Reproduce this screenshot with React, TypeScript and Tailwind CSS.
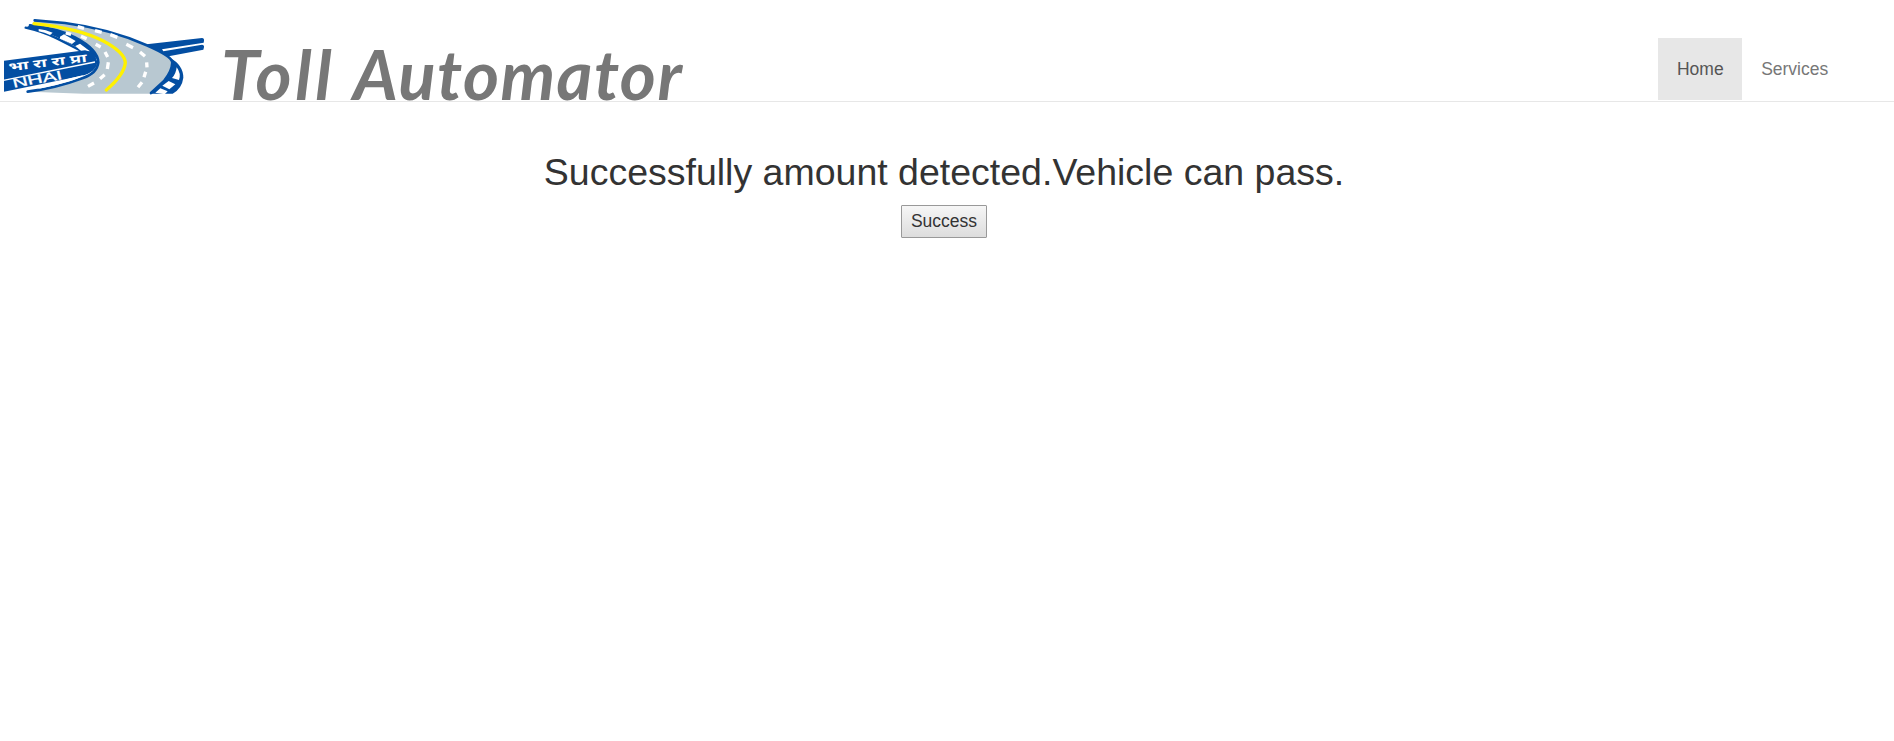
function Logo() {
  return (
    <svg viewBox="0 0 630 255" className="h-[85px] w-[210px] shrink-0" role="img" aria-label="NHAI">
      <path d="M440 103 L606 84 Q613 84 612 92 L611 98 L486 118 L490 124 L606 104 Q613 104 612 112 L610 119 L490 142Z" fill="#034ea2" />
      <path d="M510 143 Q550 165 550 203 Q546 235 518 251 L450 251 L505 200Z" fill="#034ea2" />
      <path d="M530 172 Q544 191 537 210 L516 204 Q528 192 530 172ZM506 213 L526 223 L508 238 L487 227ZM481 235 L503 244 L494 253 L466 248Z" fill="#fff" />
      <path d="M105 31 L195 39 Q330 57 440 104 Q514 133 517 158 Q516 184 493 212 L450 251 L250 251 L90 245 Q190 226 247 205 Q293 188 296 155 Q288 110 208 77 Q160 57 97 41Z" fill="#b8c8d1" />
      <path d="M104 31 L195 39 Q332 57 440 106 Q516 139 517 158 Q516 184 493 212 L453 249" fill="none" stroke="#034ea2" strokeWidth="8" strokeLinecap="round" />
      <path d="M77 53 Q130 62 170 81 L253 124 L270 128 L294 150 Q288 116 225 82 Q170 56 90 46Z" fill="#034ea2" />
      <path d="M77 53 Q130 65 172 86 L250 126" fill="none" stroke="#034ea2" strokeWidth="7" strokeLinecap="round" />
      <path d="M90 46 Q175 56 225 82 Q294 118 295 157 Q291 190 249 204 Q165 235 83 245" fill="none" stroke="#034ea2" strokeWidth="8" strokeLinecap="round" />
      <path d="M116 57 Q138 59 158 68 L150 75 Q134 68 116 64ZM180 80 L192 73 L227 93 L216 102 L180 86ZM226 108 L240 101 L270 124 L247 126Z" fill="#fff" />
      <path d="M12 152 L255 121 Q285 126 292 155 Q289 186 246 197 L12 245Z" fill="#034ea2" />
      <path d="M102 41 Q235 55 310 93 Q374 127 376 158 Q373 194 319 240" fill="none" stroke="#fff100" strokeWidth="10" strokeLinecap="round" />
      <path d="M197 69 L213 73 M243 79 L260 86 M287 103 L302 111 M315 126 L323 141 M325 157 L322 177 M314 194 L300 206 M282 219 L264 229" stroke="#fff" strokeWidth="10" />
      <path d="M233 50 L252 55 M285 62 L305 67 M331 74 L352 82 M379 103 L399 113 M420 126 L435 139 M440 157 L441 172 M437 185 L432 202 M426 217 L414 232" stroke="#fff" strokeWidth="10" />
      <path d="M10 211 L285 156" stroke="#fff" strokeWidth="4" />
      <path d="M110 238 Q180 211 251 195 Q234 212 110 238Z" fill="#fff" />
      <text transform="translate(27 184) rotate(-7)" textLength="236" lengthAdjust="spacingAndGlyphs" fill="#fff" className="font-['Noto_Sans_Devanagari','Noto_Sans',sans-serif] text-[35px] font-bold">भा रा रा प्रा</text>
      <text transform="translate(41 233) rotate(-10) skewX(4)" textLength="150" lengthAdjust="spacingAndGlyphs" fill="#fff" stroke="#fff" strokeWidth="0.8" className="font-['Liberation_Sans',sans-serif] text-[38px]">NHAI</text>
    </svg>
  );
}

export default function App() {
  return (
    <div className="min-h-screen bg-white font-['Liberation_Sans',Arial,sans-serif] text-[17.5px] leading-[25px] text-[#333]">
      <header className="flex h-[102px] items-start justify-between border-b border-[#e7e7e7] pr-[47px]">
        <div className="flex items-start">
          <div className="pt-[10px]">
            <Logo />
          </div>
          <div className="flex pt-[34px] pl-[11px] font-['Lato',sans-serif] text-[69px] leading-[80px] font-bold whitespace-pre text-[#777] italic">
            <span className="w-[132px] tracking-[3.5px]">Toll</span>
            <span className="tracking-[1.4px]">Automator</span>
          </div>
        </div>
        <nav className="flex pt-[38px]">
          <a className="flex h-[62px] items-center bg-[#e7e7e7] px-[18.75px] text-[#555]">Home</a>
          <a className="flex h-[62px] items-center px-[18.75px] text-[#777]">Services</a>
        </nav>
      </header>
      <main className="flex flex-col items-center pt-[50px] pr-[6px]">
        <h1 className="text-[37.5px] leading-[41px] font-normal">Successfully amount detected.Vehicle can pass.</h1>
        <button className="mt-[12px] h-[33px] w-[86px] rounded-[1px] border border-[#999] bg-linear-to-b from-[#f6f6f6] to-[#dddddd] pb-[1px] text-center leading-[30px]">Success</button>
      </main>
    </div>
  );
}
